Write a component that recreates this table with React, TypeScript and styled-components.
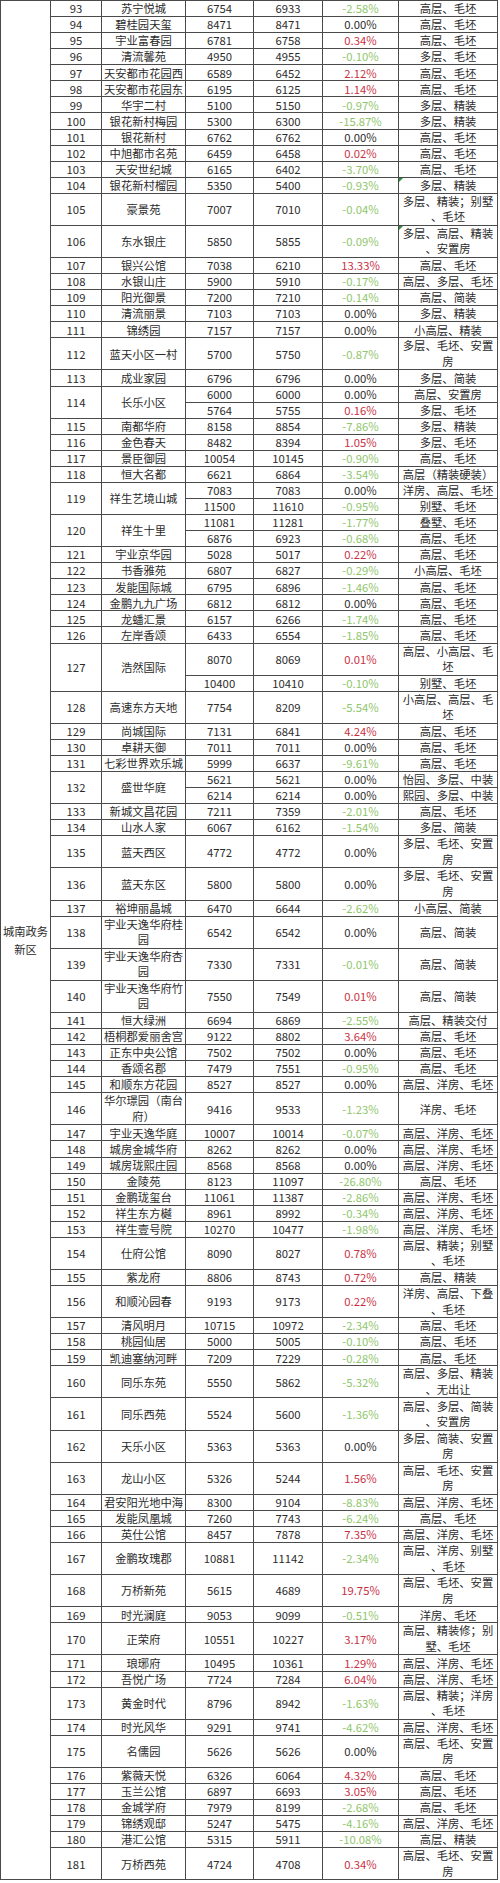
import React from "react";
import styled, { createGlobalStyle } from "styled-components";

// one text line of the sheet, in px
const UNIT = 16.07;

type Price = {
  now: string;
  before: string;
  pct: string;
  kind: string;
  flag?: boolean;
};

type Estate = {
  no: number;
  name: string;
  prices: Price[];
};

const p = (now: string, before: string, pct: string, kind: string, flag?: boolean): Price => ({
  now,
  before,
  pct,
  kind,
  flag,
});

const estates: Estate[] = [
  { no: 93, name: "苏宁悦城", prices: [p("6754", "6933", "-2.58%", "高层、毛坯")] },
  { no: 94, name: "碧桂园天玺", prices: [p("8471", "8471", "0.00%", "高层、毛坯")] },
  { no: 95, name: "宇业富春园", prices: [p("6781", "6758", "0.34%", "高层、毛坯")] },
  { no: 96, name: "清流馨苑", prices: [p("4950", "4955", "-0.10%", "多层、毛坯")] },
  { no: 97, name: "天安都市花园西", prices: [p("6589", "6452", "2.12%", "高层、毛坯")] },
  { no: 98, name: "天安都市花园东", prices: [p("6195", "6125", "1.14%", "高层、毛坯")] },
  { no: 99, name: "华宇二村", prices: [p("5100", "5150", "-0.97%", "多层、精装")] },
  { no: 100, name: "银花新村梅园", prices: [p("5300", "6300", "-15.87%", "多层、精装")] },
  { no: 101, name: "银花新村", prices: [p("6762", "6762", "0.00%", "高层、毛坯")] },
  { no: 102, name: "中旭都市名苑", prices: [p("6459", "6458", "0.02%", "高层、毛坯")] },
  { no: 103, name: "天安世纪城", prices: [p("6165", "6402", "-3.70%", "高层、毛坯")] },
  { no: 104, name: "银花新村榴园", prices: [p("5350", "5400", "-0.93%", "多层、精装", true)] },
  { no: 105, name: "豪景苑", prices: [p("7007", "7010", "-0.04%", "多层、精装；别墅\n、毛坯")] },
  { no: 106, name: "东水银庄", prices: [p("5850", "5855", "-0.09%", "多层、高层、精装\n、安置房", true)] },
  { no: 107, name: "银兴公馆", prices: [p("7038", "6210", "13.33%", "高层、毛坯")] },
  { no: 108, name: "水银山庄", prices: [p("5900", "5910", "-0.17%", "高层、多层、毛坯")] },
  { no: 109, name: "阳光御景", prices: [p("7200", "7210", "-0.14%", "高层、简装")] },
  { no: 110, name: "清流丽景", prices: [p("7103", "7103", "0.00%", "多层、精装")] },
  { no: 111, name: "锦绣园", prices: [p("7157", "7157", "0.00%", "小高层、精装")] },
  { no: 112, name: "蓝天小区一村", prices: [p("5700", "5750", "-0.87%", "多层、毛坯、安置\n房")] },
  { no: 113, name: "成业家园", prices: [p("6796", "6796", "0.00%", "多层、简装")] },
  {
    no: 114,
    name: "长乐小区",
    prices: [p("6000", "6000", "0.00%", "高层、安置房"), p("5764", "5755", "0.16%", "多层、毛坯")],
  },
  { no: 115, name: "南都华府", prices: [p("8158", "8854", "-7.86%", "多层、精装")] },
  { no: 116, name: "金色春天", prices: [p("8482", "8394", "1.05%", "多层、毛坯")] },
  { no: 117, name: "景臣御园", prices: [p("10054", "10145", "-0.90%", "高层、毛坯")] },
  { no: 118, name: "恒大名都", prices: [p("6621", "6864", "-3.54%", "高层（精装硬装）")] },
  {
    no: 119,
    name: "祥生艺境山城",
    prices: [p("7083", "7083", "0.00%", "洋房、高层、毛坯"), p("11500", "11610", "-0.95%", "别墅、毛坯")],
  },
  {
    no: 120,
    name: "祥生十里",
    prices: [p("11081", "11281", "-1.77%", "叠墅、毛坯"), p("6876", "6923", "-0.68%", "高层、毛坯")],
  },
  { no: 121, name: "宇业京华园", prices: [p("5028", "5017", "0.22%", "高层、毛坯")] },
  { no: 122, name: "书香雅苑", prices: [p("6807", "6827", "-0.29%", "小高层、毛坯")] },
  { no: 123, name: "发能国际城", prices: [p("6795", "6896", "-1.46%", "高层、毛坯")] },
  { no: 124, name: "金鹏九九广场", prices: [p("6812", "6812", "0.00%", "高层、毛坯")] },
  { no: 125, name: "龙蟠汇景", prices: [p("6157", "6266", "-1.74%", "高层、毛坯")] },
  { no: 126, name: "左岸香颂", prices: [p("6433", "6554", "-1.85%", "高层、毛坯")] },
  {
    no: 127,
    name: "浩然国际",
    prices: [p("8070", "8069", "0.01%", "高层、小高层、毛\n坯"), p("10400", "10410", "-0.10%", "别墅、毛坯")],
  },
  { no: 128, name: "高速东方天地", prices: [p("7754", "8209", "-5.54%", "小高层、高层、毛\n坯")] },
  { no: 129, name: "尚城国际", prices: [p("7131", "6841", "4.24%", "高层、毛坯")] },
  { no: 130, name: "卓耕天御", prices: [p("7011", "7011", "0.00%", "高层、毛坯")] },
  { no: 131, name: "七彩世界欢乐城", prices: [p("5999", "6637", "-9.61%", "高层、毛坯")] },
  {
    no: 132,
    name: "盛世华庭",
    prices: [p("5621", "5621", "0.00%", "怡园、多层、中装"), p("6214", "6214", "0.00%", "熙园、多层、中装")],
  },
  { no: 133, name: "新城文昌花园", prices: [p("7211", "7359", "-2.01%", "高层、毛坯")] },
  { no: 134, name: "山水人家", prices: [p("6067", "6162", "-1.54%", "多层、简装")] },
  { no: 135, name: "蓝天西区", prices: [p("4772", "4772", "0.00%", "多层、毛坯、安置\n房")] },
  { no: 136, name: "蓝天东区", prices: [p("5800", "5800", "0.00%", "多层、毛坯、安置\n房")] },
  { no: 137, name: "裕坤丽晶城", prices: [p("6470", "6644", "-2.62%", "小高层、简装")] },
  { no: 138, name: "宇业天逸华府桂\n园", prices: [p("6542", "6542", "0.00%", "高层、简装")] },
  { no: 139, name: "宇业天逸华府杏\n园", prices: [p("7330", "7331", "-0.01%", "高层、简装")] },
  { no: 140, name: "宇业天逸华府竹\n园", prices: [p("7550", "7549", "0.01%", "高层、简装")] },
  { no: 141, name: "恒大绿洲", prices: [p("6694", "6869", "-2.55%", "高层、精装交付")] },
  { no: 142, name: "梧桐郡爱丽舍宫", prices: [p("9122", "8802", "3.64%", "高层、毛坯")] },
  { no: 143, name: "正东中央公馆", prices: [p("7502", "7502", "0.00%", "高层、毛坯")] },
  { no: 144, name: "香颂名郡", prices: [p("7479", "7551", "-0.95%", "高层、毛坯")] },
  { no: 145, name: "和顺东方花园", prices: [p("8527", "8527", "0.00%", "高层、洋房、毛坯")] },
  { no: 146, name: "华尔璟园（南台\n府）", prices: [p("9416", "9533", "-1.23%", "洋房、毛坯")] },
  { no: 147, name: "宇业天逸华庭", prices: [p("10007", "10014", "-0.07%", "高层、洋房、毛坯")] },
  { no: 148, name: "城房金城华府", prices: [p("8262", "8262", "0.00%", "高层、洋房、毛坯")] },
  { no: 149, name: "城房珑熙庄园", prices: [p("8568", "8568", "0.00%", "高层、洋房、毛坯")] },
  { no: 150, name: "金陵苑", prices: [p("8123", "11097", "-26.80%", "高层、毛坯")] },
  { no: 151, name: "金鹏珑玺台", prices: [p("11061", "11387", "-2.86%", "高层、洋房、毛坯")] },
  { no: 152, name: "祥生东方樾", prices: [p("8961", "8992", "-0.34%", "高层、洋房、毛坯")] },
  { no: 153, name: "祥生壹号院", prices: [p("10270", "10477", "-1.98%", "高层、洋房、毛坯")] },
  { no: 154, name: "仕府公馆", prices: [p("8090", "8027", "0.78%", "高层、精装；别墅\n、毛坯")] },
  { no: 155, name: "紫龙府", prices: [p("8806", "8743", "0.72%", "高层、精装")] },
  { no: 156, name: "和顺沁园春", prices: [p("9193", "9173", "0.22%", "洋房、高层、下叠\n、毛坯")] },
  { no: 157, name: "清风明月", prices: [p("10715", "10972", "-2.34%", "高层、毛坯")] },
  { no: 158, name: "桃园仙居", prices: [p("5000", "5005", "-0.10%", "高层、毛坯")] },
  { no: 159, name: "凯迪塞纳河畔", prices: [p("7209", "7229", "-0.28%", "高层、毛坯")] },
  { no: 160, name: "同乐东苑", prices: [p("5550", "5862", "-5.32%", "高层、多层、精装\n、无出让")] },
  { no: 161, name: "同乐西苑", prices: [p("5524", "5600", "-1.36%", "高层、多层、简装\n、安置房")] },
  { no: 162, name: "天乐小区", prices: [p("5363", "5363", "0.00%", "多层、简装、安置\n房")] },
  { no: 163, name: "龙山小区", prices: [p("5326", "5244", "1.56%", "高层、毛坯、安置\n房")] },
  { no: 164, name: "君安阳光地中海", prices: [p("8300", "9104", "-8.83%", "高层、洋房、毛坯")] },
  { no: 165, name: "发能凤凰城", prices: [p("7260", "7743", "-6.24%", "高层、毛坯")] },
  { no: 166, name: "英仕公馆", prices: [p("8457", "7878", "7.35%", "高层、洋房、毛坯")] },
  { no: 167, name: "金鹏玫瑰郡", prices: [p("10881", "11142", "-2.34%", "高层、洋房、别墅\n、毛坯")] },
  { no: 168, name: "万桥新苑", prices: [p("5615", "4689", "19.75%", "高层、毛坯、安置\n房")] },
  { no: 169, name: "时光澜庭", prices: [p("9053", "9099", "-0.51%", "洋房、毛坯")] },
  { no: 170, name: "正荣府", prices: [p("10551", "10227", "3.17%", "高层、精装修；别\n墅、毛坯")] },
  { no: 171, name: "琅琊府", prices: [p("10495", "10361", "1.29%", "高层、洋房、毛坯")] },
  { no: 172, name: "吾悦广场", prices: [p("7724", "7284", "6.04%", "高层、洋房、毛坯")] },
  { no: 173, name: "黄金时代", prices: [p("8796", "8942", "-1.63%", "高层、精装；洋房\n、毛坯")] },
  { no: 174, name: "时光风华", prices: [p("9291", "9741", "-4.62%", "高层、洋房、毛坯")] },
  { no: 175, name: "名儒园", prices: [p("5626", "5626", "0.00%", "高层、毛坯、安置\n房")] },
  { no: 176, name: "紫薇天悦", prices: [p("6326", "6064", "4.32%", "高层、毛坯")] },
  { no: 177, name: "玉兰公馆", prices: [p("6897", "6693", "3.05%", "高层、毛坯")] },
  { no: 178, name: "金城学府", prices: [p("7979", "8199", "-2.68%", "高层、毛坯")] },
  { no: 179, name: "锦绣观邸", prices: [p("5247", "5475", "-4.16%", "高层、洋房、毛坯")] },
  { no: 180, name: "港汇公馆", prices: [p("5315", "5911", "-10.08%", "高层、精装")] },
  { no: 181, name: "万桥西苑", prices: [p("4724", "4708", "0.34%", "高层、毛坯、安置\n房")] },
];

// column widths, border centre to border centre
const columnWidths = [50, 51, 84, 68, 69, 76, 99];

const GlobalStyle = createGlobalStyle`
  html, body {
    margin: 0;
    padding: 0;
    background: #ffffff;
  }
  body {
    font-family: "Noto Sans CJK SC", "Noto Sans", sans-serif;
  }
`;

const Sheet = styled.table`
  border-collapse: collapse;
  table-layout: fixed;
  width: 498px;
  font-size: 11.3px;
  line-height: 14.5px;
  color: #2b2b2b;
`;

const Column = styled.col<{ $width: number }>`
  width: ${(props) => props.$width}px;
`;

const Row = styled.tr<{ $lines: number }>`
  height: ${(props) => props.$lines * UNIT}px;
`;

const Cell = styled.td`
  border: 1px solid #4a4a4a;
  padding: 0;
  text-align: center;
  vertical-align: middle;
  white-space: pre;
  overflow: hidden;
`;

const DistrictCell = styled(Cell)`
  white-space: normal;
  line-height: 18px;
`;

const WrapCell = styled(Cell)<{ $lines: number }>`
  line-height: ${(props) => (props.$lines > 1 ? "15.5px" : "14.5px")};
`;

type Tone = "up" | "down" | "flat";

const toneColor: Record<Tone, string> = {
  up: "#c9303f",
  down: "#8fc66c",
  flat: "#2b2b2b",
};

const PctCell = styled(Cell)<{ $tone: Tone }>`
  color: ${(props) => toneColor[props.$tone]};
`;

const KindCell = styled(WrapCell)<{ $flag?: boolean }>`
  position: relative;

  &::before {
    content: "";
    display: ${(props) => (props.$flag ? "block" : "none")};
    position: absolute;
    top: 0;
    left: 0;
    border-top: 4px solid #2f8a3a;
    border-right: 4px solid transparent;
  }
`;

const toneOf = (pct: string): Tone => {
  if (pct.startsWith("-")) return "down";
  if (pct === "0.00%") return "flat";
  return "up";
};

const linesOf = (text: string) => text.split("\n").length;

const App = () => {
  const rows: React.ReactNode[] = [];
  const total = estates.reduce((sum, e) => sum + e.prices.length, 0);

  estates.forEach((estate, ei) => {
    const single = estate.prices.length === 1;
    estate.prices.forEach((price, pi) => {
      const lines = Math.max(linesOf(price.kind), single ? linesOf(estate.name) : 1);
      rows.push(
        <Row key={`${estate.no}-${pi}`} $lines={lines}>
          {ei === 0 && pi === 0 && <DistrictCell rowSpan={total}>城南政务新区</DistrictCell>}
          {pi === 0 && (
            <>
              <Cell rowSpan={estate.prices.length}>{estate.no}</Cell>
              <WrapCell rowSpan={estate.prices.length} $lines={linesOf(estate.name)}>
                {estate.name}
              </WrapCell>
            </>
          )}
          <Cell>{price.now}</Cell>
          <Cell>{price.before}</Cell>
          <PctCell $tone={toneOf(price.pct)}>{price.pct}</PctCell>
          <KindCell $lines={linesOf(price.kind)} $flag={price.flag}>
            {price.kind}
          </KindCell>
        </Row>
      );
    });
  });

  return (
    <>
      <GlobalStyle />
      <Sheet>
        <colgroup>
          {columnWidths.map((w, i) => (
            <Column key={i} $width={w} />
          ))}
        </colgroup>
        <tbody>{rows}</tbody>
      </Sheet>
    </>
  );
};

export default App;
